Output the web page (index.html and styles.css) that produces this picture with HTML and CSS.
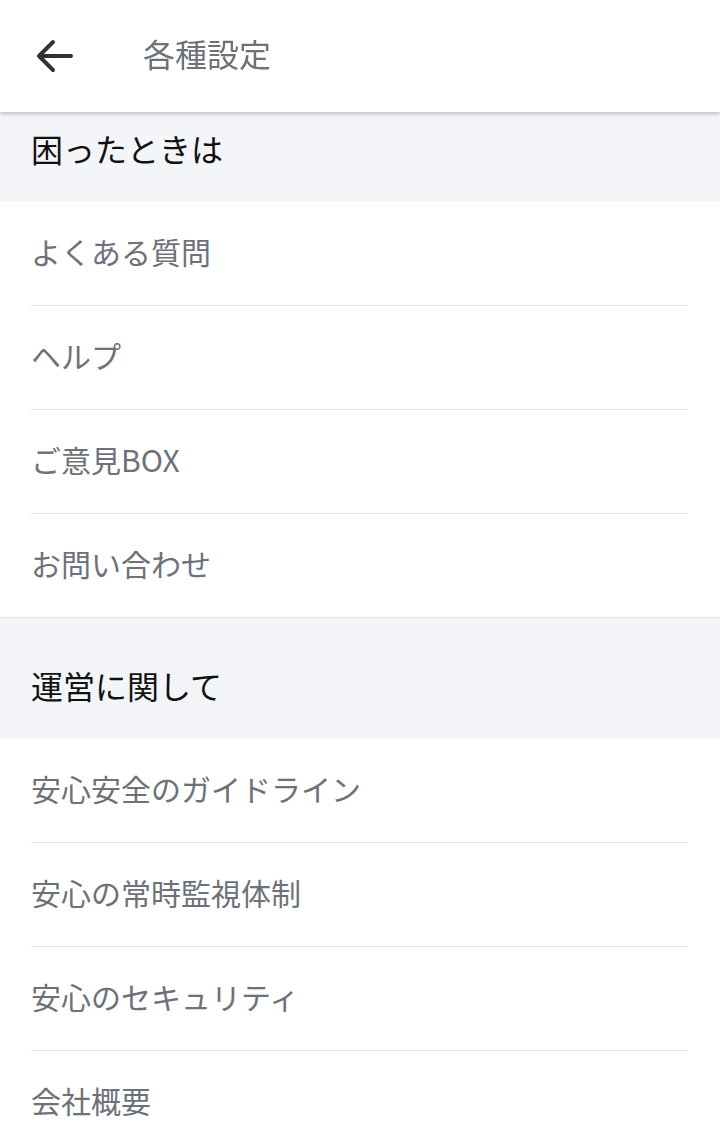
FILE: index.html
```html
<!DOCTYPE html>
<html lang="ja">
<head>
    <meta charset="UTF-8">
    <meta name="viewport" content="width=device-width, initial-scale=1.0">
    <title>各種設定</title>
    <link rel="stylesheet" href="styles.css">
</head>
<body>
    <header class="topbar">
        <button class="back" type="button" aria-label="戻る">
            <svg width="40" height="40" viewBox="0 0 40 40">
                <path d="M37 20H5M19 6L5 20l14 14" fill="none" stroke="#333" stroke-width="4" stroke-linecap="round" stroke-linejoin="round"/>
            </svg>
        </button>
        <h1 class="title">各種設定</h1>
    </header>

    <main class="content">
        <section>
            <h2 class="section-title">困ったときは</h2>
            <ul class="menu">
                <li class="item">よくある質問</li>
                <li class="item">ヘルプ</li>
                <li class="item">ご意見BOX</li>
                <li class="item">お問い合わせ</li>
            </ul>
        </section>
        <section>
            <h2 class="section-title">運営に関して</h2>
            <ul class="menu">
                <li class="item">安心安全のガイドライン</li>
                <li class="item">安心の常時監視体制</li>
                <li class="item">安心のセキュリティ</li>
                <li class="item">会社概要</li>
            </ul>
        </section>
    </main>
</body>
</html>
```

FILE: styles.css
```css
body {
    margin: 0;
    background: #ffffff;
    font-family: "Noto Sans CJK JP", "Noto Sans", sans-serif;
}
.topbar {
    position: fixed;
    top: 0;
    left: 0;
    right: 0;
    height: 112px;
    display: flex;
    align-items: center;
    background: #ffffff;
    box-shadow: 0 2px 4px rgba(0, 0, 0, 0.22);
    z-index: 10;
}
.back {
    width: 40px;
    height: 40px;
    margin-left: 34px;
    padding: 0;
    border: none;
    background: none;
}
.title {
    margin: 0 0 6px 69px;
    font-size: 32px;
    font-weight: normal;
    color: #6d7178;
}
.content {
    padding-top: 81px;
}
.section-title {
    height: 121px;
    box-sizing: border-box;
    margin: 0;
    padding: 13px 31px 0;
    display: flex;
    align-items: center;
    font-size: 32px;
    font-weight: normal;
    color: #111111;
    background: #f4f5f9;
}
section + section .section-title {
    height: 122px;
    border-top: 1px solid #dfe3ea;
}
.menu {
    list-style: none;
    margin: 0;
    padding: 0;
}
.item {
    height: 97px;
    margin: 0 32px 0 31px;
    padding-bottom: 6px;
    display: flex;
    align-items: center;
    font-size: 30px;
    line-height: 1;
    color: #6d7179;
    border-bottom: 1px solid #dfe2ea;
}
.item:last-child {
    border-bottom: none;
}
```
